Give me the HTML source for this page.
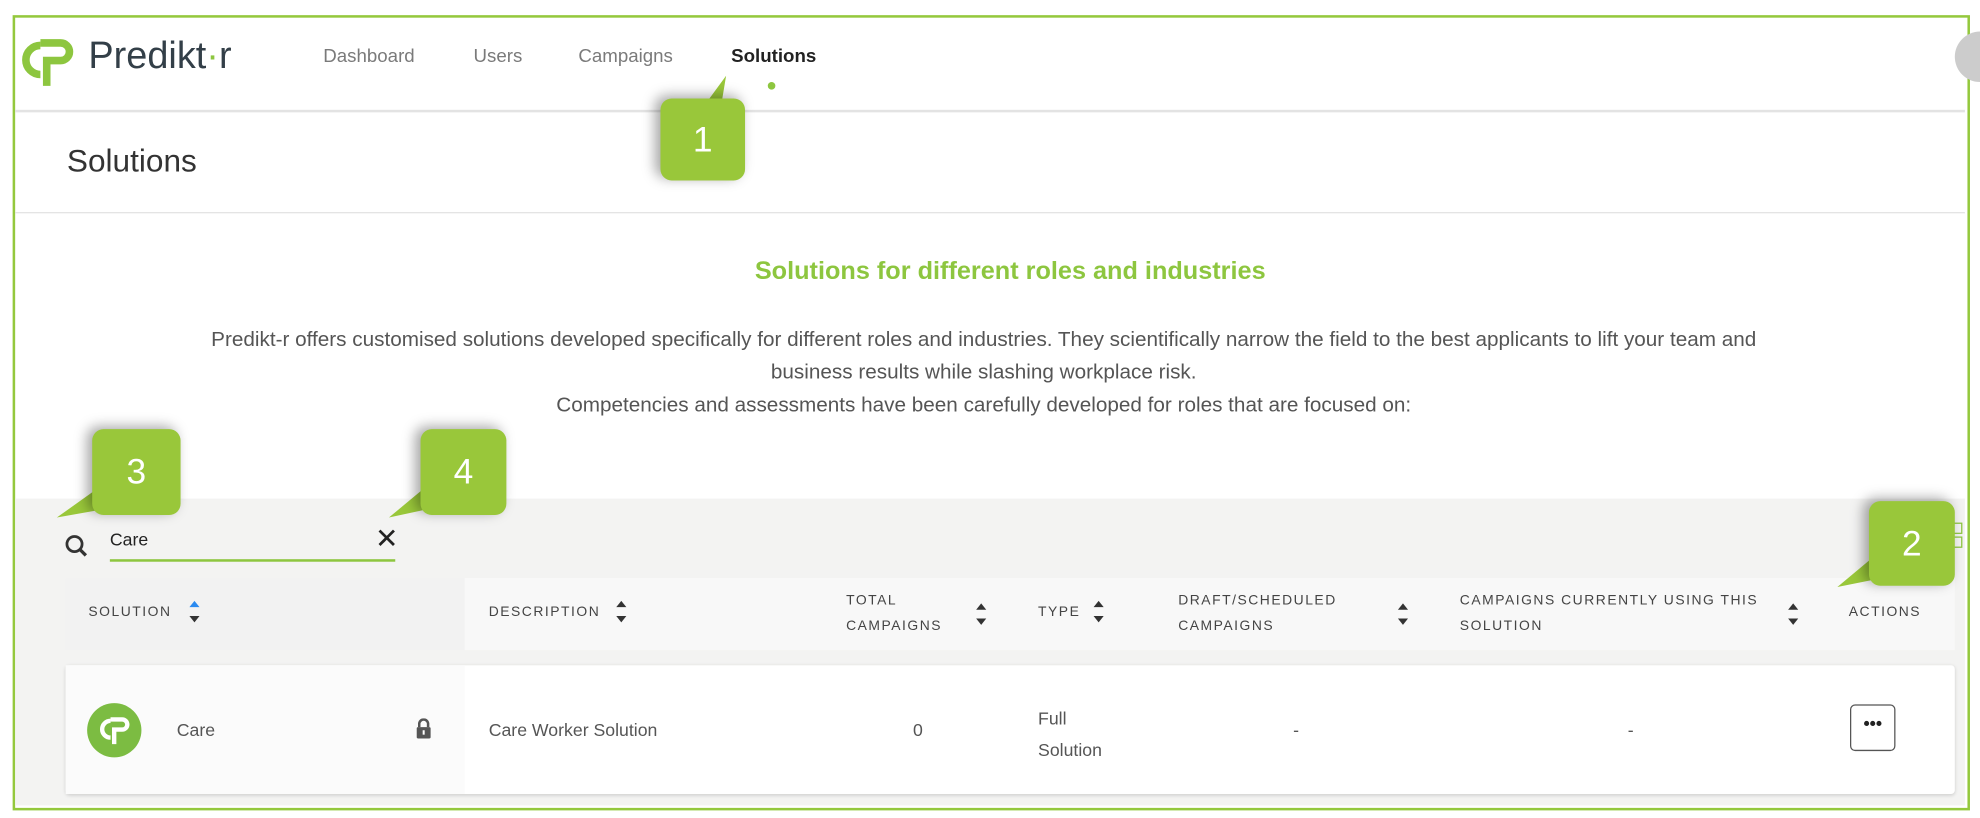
<!DOCTYPE html>
<html><head><meta charset="utf-8">
<style>
html,body{margin:0;padding:0;background:#fff;width:1980px;height:818px;overflow:hidden}
#w{position:absolute;left:0;top:0;width:1568px;height:648px;transform:scale(1.2628,1.2623);transform-origin:0 0;font-family:"Liberation Sans",sans-serif;color:#444}
.a{position:absolute;white-space:nowrap}
.nav{font-size:14.8px;color:#7a7a7a;top:37px}
.th{font-size:11px;letter-spacing:1.2px;color:#444;line-height:20px}
.badge{position:absolute;background:#99c73a;border-radius:9px;color:#fff;font-size:28px;text-align:center;box-shadow:-4px -2px 10px rgba(0,0,0,.35)}
.arr{position:absolute;width:0;height:0;border-left:4px solid transparent;border-right:4px solid transparent}
</style></head><body>
<div id="w">
<div class="a" style="left:10px;top:12px;width:1546px;height:626px;border:2px solid #94c83d"></div>
<!-- logo -->
<svg class="a" style="left:12px;top:27px" width="52" height="42" viewBox="0 0 52 42"><path d="M20 9 A11.5 11.5 0 1 0 20 32" fill="none" stroke="#8dc63f" stroke-width="6"/><path d="M25 41 V21 H36 A7 7 0 0 0 36 7 H20" fill="none" stroke="#8dc63f" stroke-width="6"/></svg>
<div class="a" style="left:70px;top:28px;font-size:30px;color:#333f48">Predikt<span style="color:#8dc63f">·</span>r</div>
<div class="a nav" style="left:256px">Dashboard</div>
<div class="a nav" style="left:375px">Users</div>
<div class="a nav" style="left:458px">Campaigns</div>
<div class="a nav" style="left:579px;color:#222;font-weight:bold">Solutions</div>
<div class="a" style="left:608px;top:65px;width:6px;height:6px;border-radius:3px;background:#8dc63f"></div>
<div class="a" style="left:1548px;top:25px;width:40px;height:40px;border-radius:20px;background:#ccc"></div>
<div class="a" style="left:12px;top:87px;width:1544px;height:2px;background:#e3e3e3"></div>
<div class="a" style="left:53px;top:114px;font-size:25px;color:#333">Solutions</div>
<div class="a" style="left:12px;top:168px;width:1544px;height:1px;background:#e3e3e3"></div>
<div class="a" style="left:0;width:1600px;text-align:center;top:204px;font-size:20px;font-weight:bold;color:#8dc63f">Solutions for different roles and industries</div>
<div class="a" style="left:0;width:1558px;text-align:center;top:256px;font-size:16.4px;line-height:26px;color:#555;white-space:normal">Predikt-r offers customised solutions developed specifically for different roles and industries. They scientifically narrow the field to the best applicants to lift your team and<br>business results while slashing workplace risk.<br>Competencies and assessments have been carefully developed for roles that are focused on:</div>
<div class="a" style="left:12px;top:395px;width:1544px;height:243px;background:#f3f3f2"></div>
<svg class="a" style="left:51px;top:423px" width="20" height="20" viewBox="0 0 20 20"><circle cx="8" cy="8" r="6" fill="none" stroke="#333" stroke-width="2.2"/><path d="M12 12 L17 17" stroke="#333" stroke-width="2.6"/></svg>
<div class="a" style="left:87px;top:419px;font-size:14px;color:#222">Care</div>
<div class="a" style="left:297px;top:414px;font-size:22px;color:#222">✕</div>
<div class="a" style="left:87px;top:443px;width:226px;height:2px;background:#8dc63f"></div>
<div class="a" style="left:1546px;top:414px;width:6px;height:7px;border:1px solid #8dc63f"></div>
<div class="a" style="left:1546px;top:425px;width:6px;height:7px;border:1px solid #8dc63f"></div>
<div class="a" style="left:52px;top:458px;width:316px;height:57px;background:#f2f2f2"></div>
<div class="a" style="left:368px;top:458px;width:1180px;height:57px;background:#f8f8f8"></div>
<div class="a th" style="left:70px;top:475px">SOLUTION</div>
<div class="a th" style="left:387px;top:475px">DESCRIPTION</div>
<div class="a th" style="left:670px;top:466px">TOTAL<br>CAMPAIGNS</div>
<div class="a th" style="left:822px;top:475px">TYPE</div>
<div class="a th" style="left:933px;top:466px">DRAFT/SCHEDULED<br>CAMPAIGNS</div>
<div class="a th" style="left:1156px;top:466px">CAMPAIGNS CURRENTLY USING THIS<br>SOLUTION</div>
<div class="a th" style="left:1464px;top:475px">ACTIONS</div>
<div class="arr" style="left:150px;top:476px;border-bottom:5px solid #2a8af0"></div><div class="arr" style="left:150px;top:488px;border-top:5px solid #333"></div>
<div class="arr" style="left:488px;top:476px;border-bottom:5px solid #333"></div><div class="arr" style="left:488px;top:488px;border-top:5px solid #333"></div>
<div class="arr" style="left:773px;top:478px;border-bottom:5px solid #333"></div><div class="arr" style="left:773px;top:490px;border-top:5px solid #333"></div>
<div class="arr" style="left:866px;top:476px;border-bottom:5px solid #333"></div><div class="arr" style="left:866px;top:488px;border-top:5px solid #333"></div>
<div class="arr" style="left:1107px;top:478px;border-bottom:5px solid #333"></div><div class="arr" style="left:1107px;top:490px;border-top:5px solid #333"></div>
<div class="arr" style="left:1416px;top:478px;border-bottom:5px solid #333"></div><div class="arr" style="left:1416px;top:490px;border-top:5px solid #333"></div>
<div class="a" style="left:52px;top:527px;width:1496px;height:102px;background:#fff;border-radius:3px;box-shadow:0 1px 3px rgba(0,0,0,.15)"></div>
<div class="a" style="left:52px;top:527px;width:316px;height:102px;background:#fbfbfb"></div>
<div class="a" style="left:69px;top:557px;width:43px;height:43px;border-radius:22px;background:#7cbc42"></div>
<svg class="a" style="left:76px;top:565px" width="30" height="26" viewBox="0 0 52 42"><path d="M20 9 A11.5 11.5 0 1 0 20 32" fill="none" stroke="#fff" stroke-width="6"/><path d="M25 41 V21 H36 A7 7 0 0 0 36 7 H20" fill="none" stroke="#fff" stroke-width="6"/></svg>
<div class="a" style="left:140px;top:570px;font-size:14px;color:#555">Care</div>
<svg class="a" style="left:329px;top:569px" width="13" height="16" viewBox="0 0 13 16"><path d="M3 7 V4.5 A3.5 3.5 0 0 1 10 4.5 V7" fill="none" stroke="#555" stroke-width="2"/><rect x="1" y="7" width="11" height="9" rx="1" fill="#555"/><rect x="5.7" y="9.5" width="1.6" height="3.5" fill="#fff"/></svg>
<div class="a" style="left:387px;top:570px;font-size:14px;color:#555">Care Worker Solution</div>
<div class="a" style="left:723px;top:570px;font-size:14px;color:#555">0</div>
<div class="a" style="left:822px;top:557px;font-size:14px;color:#555;line-height:25px">Full<br>Solution</div>
<div class="a" style="left:1024px;top:570px;font-size:14px;color:#555">-</div>
<div class="a" style="left:1289px;top:570px;font-size:14px;color:#555">-</div>
<div class="a" style="left:1465px;top:558px;width:34px;height:35px;border:1.5px solid #555;border-radius:4px;background:#fff;text-align:center;font-size:14px;line-height:28px;color:#222;font-weight:bold">•••</div>
<svg class="a" style="left:0;top:0" width="1568" height="648"><polygon points="575,60 556,86 570,90" fill="#99c73a"/><polygon points="45,410 80,385 90,402" fill="#99c73a"/><polygon points="308,410 338,385 345,402" fill="#99c73a"/><polygon points="1455,465 1485,440 1490,458" fill="#99c73a"/></svg>
<div class="badge" style="left:523px;top:78px;width:67px;height:65px;line-height:65px">1</div>
<div class="badge" style="left:73px;top:340px;width:70px;height:68px;line-height:68px">3</div>
<div class="badge" style="left:333px;top:340px;width:68px;height:68px;line-height:68px">4</div>
<div class="badge" style="left:1480px;top:397px;width:68px;height:67px;line-height:67px">2</div>
</div>
</body></html>
